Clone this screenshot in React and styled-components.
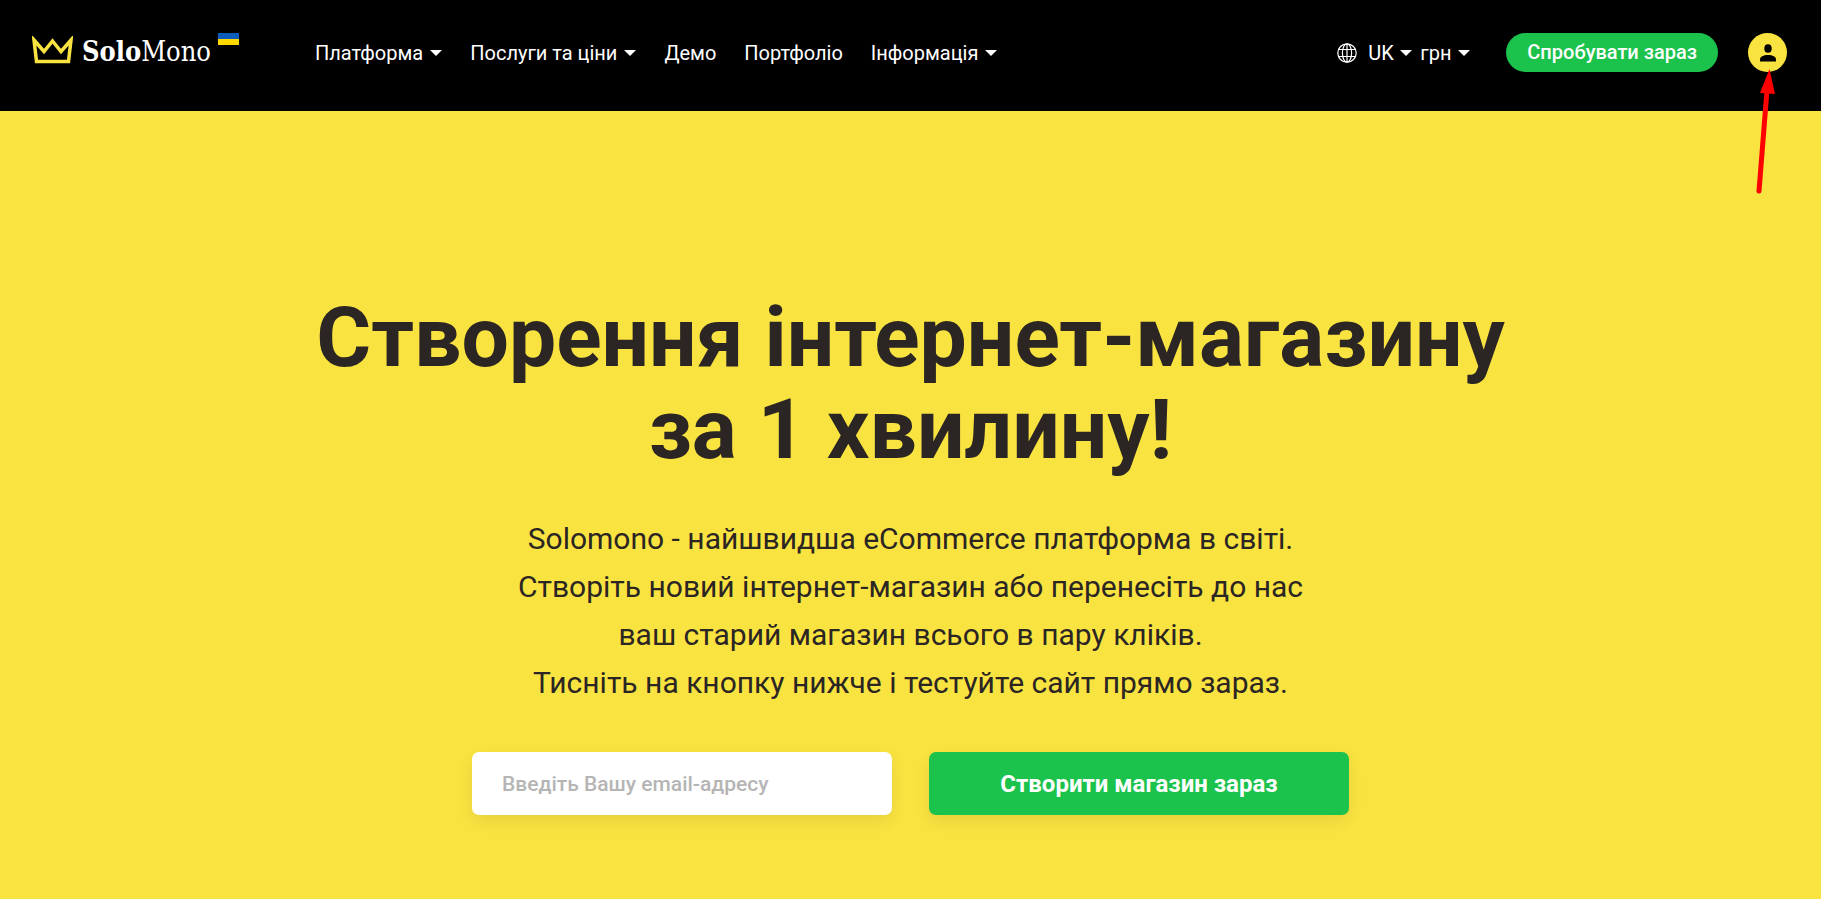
import React from "react";
import styled, { createGlobalStyle } from "styled-components";

const YELLOW = "#f9e341";
const GREEN = "#1bc24b";
const INK = "#2b2523";

const GlobalStyle = createGlobalStyle`
  *, *::before, *::after { box-sizing: border-box; }
  body {
    margin: 0;
    background: ${YELLOW};
    color: ${INK};
    font-family: Roboto, "Noto Sans", sans-serif;
  }
  button, input, select { font: inherit; }
`;

const Header = styled.header`
  display: flex;
  align-items: flex-start;
  background: #000;
  color: #fff;
  padding: 33px 34px 38px 32px;
`;

const Logo = styled.a`
  display: flex;
  align-items: flex-start;
  color: #fff;
  text-decoration: none;
`;

const Crown = styled.svg`
  width: 41px;
  height: 28px;
  margin: 3px 9px 0 0;
`;

const LogoText = styled.span`
  font-family: "DejaVu Serif Condensed", "DejaVu Serif", serif;
  font-size: 27px;
  line-height: 38px;
`;

const Flag = styled.svg`
  width: 21px;
  height: 12px;
  margin-left: 7px;
`;

const Nav = styled.nav`
  display: flex;
  gap: 28px;
  margin-left: 76px;
`;

const NavLink = styled.a`
  display: flex;
  align-items: center;
  gap: 7px;
  color: #fff;
  font-size: 20px;
  line-height: 40px;
  text-decoration: none;
  white-space: nowrap;
`;

const CaretShape = styled.svg`
  width: 12px;
  height: 6px;
  flex: none;
  pointer-events: none;
`;

const Tools = styled.div`
  display: flex;
  align-items: center;
  margin-left: auto;
`;

const Globe = styled.svg`
  width: 20px;
  height: 20px;
  margin-right: 11px;
`;

const Picker = styled.label`
  display: flex;
  align-items: center;
  gap: 6px;
  margin-right: ${(p) => p.$after};
`;

const Select = styled.select`
  appearance: none;
  border: 0;
  padding: 0;
  background: transparent;
  color: #fff;
  font-size: 20px;
  line-height: 38px;
  cursor: pointer;
`;

const TryButton = styled.button`
  height: 39px;
  padding: 0 21px;
  border: 0;
  border-radius: 20px;
  background: ${GREEN};
  color: #fff;
  font-size: 20px;
  font-weight: 500;
  line-height: 39px;
  white-space: nowrap;
  cursor: pointer;
`;

const Account = styled.button`
  position: relative;
  display: grid;
  place-items: center;
  width: 39px;
  height: 39px;
  margin-left: 30px;
  padding: 0;
  border: 0;
  border-radius: 50%;
  background: ${YELLOW};
  cursor: pointer;
`;

const Person = styled.svg`
  width: 16px;
  height: 18px;
`;

const Arrow = styled.svg`
  position: absolute;
  top: 35px;
  left: 6px;
  width: 24px;
  height: 128px;
  pointer-events: none;
`;

const Hero = styled.main`
  display: flex;
  flex-direction: column;
  align-items: center;
  padding: 181px 24px 84px;
  text-align: center;
`;

const Title = styled.h1`
  margin: 0;
  font-size: 84px;
  line-height: 92px;
  font-weight: 700;
`;

const Lead = styled.p`
  margin: 39px 0 0;
  font-size: 30px;
  line-height: 48px;
`;

const Form = styled.form`
  display: flex;
  flex-wrap: wrap;
  justify-content: center;
  gap: 37px;
  margin-top: 45px;
`;

const Email = styled.input`
  width: 420px;
  height: 63px;
  padding: 0 30px;
  border: 0;
  border-radius: 7px;
  background: #fff;
  color: ${INK};
  font-size: 21px;
  font-weight: 500;
  box-shadow: 0 6px 16px rgba(0, 0, 0, 0.08);
  &::placeholder { color: #b5b5b5; opacity: 1; }
`;

const Submit = styled.button`
  width: 420px;
  height: 63px;
  border: 0;
  border-radius: 7px;
  background: ${GREEN};
  color: #fff;
  font-size: 24px;
  font-weight: 700;
  box-shadow: 0 6px 16px rgba(0, 0, 0, 0.08);
  cursor: pointer;
`;

const Caret = () => (
  <CaretShape viewBox="0 0 12 6" aria-hidden="true">
    <path d="M0 0H12L6 6Z" fill="#fff" />
  </CaretShape>
);

const navItems = [
  { label: "Платформа", menu: true },
  { label: "Послуги та ціни", menu: true },
  { label: "Демо" },
  { label: "Портфоліо" },
  { label: "Інформація", menu: true },
];

export default function App() {
  return (
    <>
      <GlobalStyle />
      <Header>
        <Logo href="#">
          <Crown viewBox="0 0 41 28" aria-hidden="true">
            <path
              d="M2 4L12 15.500L20.500 5L29 15.500L39 4L36.500 25.500H4.500Z"
              fill="none"
              stroke={YELLOW}
              strokeWidth="3.500"
            />
          </Crown>
          <LogoText>
            <b>Solo</b>Mono
          </LogoText>
          <Flag viewBox="0 0 21 12" aria-hidden="true">
            <path d="M0 0H21V6H0Z" fill="#0b5cbb" />
            <path d="M0 6H21V12H0Z" fill="#ffd800" />
          </Flag>
        </Logo>
        <Nav aria-label="Головне меню">
          {navItems.map(({ label, menu }) => (
            <NavLink href="#" key={label}>
              {label}
              {menu && <Caret />}
            </NavLink>
          ))}
        </Nav>
        <Tools>
          <Globe viewBox="0 0 20 20" fill="none" stroke="#fff" strokeWidth="1.2" aria-hidden="true">
            <circle cx="10" cy="10" r="9.200" />
            <ellipse cx="10" cy="10" rx="4.600" ry="9.200" />
            <path d="M10 1V19M1.500 6.500H18.500M1.500 13.500H18.500" />
          </Globe>
          <Picker $after="8px">
            <Select aria-label="Мова">
              <option>UK</option>
            </Select>
            <Caret />
          </Picker>
          <Picker $after="36px">
            <Select aria-label="Валюта">
              <option>грн</option>
            </Select>
            <Caret />
          </Picker>
          <TryButton type="button">Спробувати зараз</TryButton>
          <Account type="button" aria-label="Особистий кабінет">
            <Person viewBox="0 0 16 18" aria-hidden="true">
              <ellipse cx="8" cy="4.500" rx="3.700" ry="4.300" />
              <path d="M0 17.500V15.500C0 12.500 3.500 11 8 11S16 12.500 16 15.500V17.500Z" />
            </Person>
            <Arrow viewBox="0 0 24 128" aria-hidden="true">
              <path d="M13 22L5 123" stroke="#f00" strokeWidth="5" strokeLinecap="round" />
              <path d="M15.500 1L6 25L21 26Z" fill="#f00" />
            </Arrow>
          </Account>
        </Tools>
      </Header>
      <Hero>
        <Title>
          Створення інтернет-магазину
          <br />
          за 1 хвилину!
        </Title>
        <Lead>
          Solomono - найшвидша eCommerce платформа в світі.
          <br />
          Створіть новий інтернет-магазин або перенесіть до нас
          <br />
          ваш старий магазин всього в пару кліків.
          <br />
          Тисніть на кнопку нижче і тестуйте сайт прямо зараз.
        </Lead>
        <Form onSubmit={(e) => e.preventDefault()}>
          <Email type="email" aria-label="Email" placeholder="Введіть Вашу email-адресу" />
          <Submit type="submit">Створити магазин зараз</Submit>
        </Form>
      </Hero>
    </>
  );
}
